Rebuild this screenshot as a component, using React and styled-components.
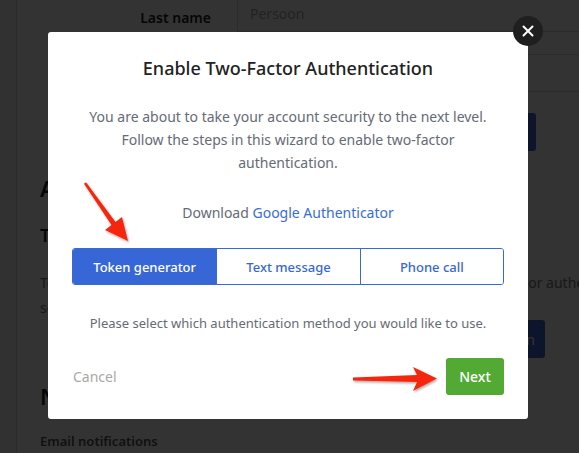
import React from 'react'
import styled, { createGlobalStyle } from 'styled-components'

const GlobalStyle = createGlobalStyle`
  html, body {
    margin: 0;
    padding: 0;
    background: #333;
  }
  body {
    font-family: "Noto Sans", "Open Sans", sans-serif;
  }
`;

const Page = styled.div`
  position: relative;
  width: 579px;
  height: 453px;
  overflow: hidden;
  display: flex;
  background: #fff;
`;

const Sidebar = styled.div`
  width: 16px;
  flex-shrink: 0;
  border-right: 1px solid #d6d6d6;
  background: #f4f4f4;
`;

const Main = styled.div`
  flex: 1;
  display: flex;
  flex-direction: column;
  padding-left: 23px;
  min-width: 0;

  & > * {
    flex-shrink: 0;
  }
`;

const FormRow = styled.div`
  display: flex;
  height: 38px;
  margin-top: ${p => p.$top}px;
`;

const Label = styled.div`
  width: 171px;
  text-align: right;
  font-size: 14px;
  font-weight: 600;
  color: #222;
  padding-top: 14px;
  box-sizing: border-box;
`;

const Input = styled.div`
  flex: 1;
  margin-left: 26px;
  border: 1px solid #d8d8d8;
  border-right: none;
  font-size: 14px;
  color: #aaa;
  padding: 9px 12px;
  box-sizing: border-box;
`;

const SaveButton = styled.div`
  align-self: flex-end;
  height: 38px;
  width: ${p => p.$w}px;
  margin-top: ${p => p.$top}px;
  margin-right: ${p => p.$right}px;
  background: #3d6ad6;
  border-radius: 3px;
  color: #fff;
  font-size: 14px;
  display: flex;
  align-items: center;
  justify-content: flex-end;
  padding-right: 10px;
  box-sizing: border-box;
`;

const Heading = styled.h2`
  margin: ${p => p.$top}px 0 0;
  font-size: 22px;
  line-height: 30px;
  font-weight: 600;
  color: #222;
`;

const SubHeading = styled.h3`
  margin: 19px 0 0;
  font-size: 18px;
  line-height: 26px;
  font-weight: 600;
  color: #222;
`;

const BodyText = styled.p`
  margin: 22px 0 0;
  font-size: 14px;
  line-height: 25px;
  color: #777;
  white-space: nowrap;
`;

const SmallLabel = styled.div`
  margin-top: 21px;
  font-size: 13px;
  line-height: 18px;
  font-weight: 600;
  color: #555;
`;

const CheckRow = styled.div`
  display: flex;
  gap: 248px;
  margin-top: 3px;
`;

const Check = styled.div`
  width: 14px;
  height: 14px;
  border: 1px solid #bbb;
  border-radius: 2px;
`;

const Overlay = styled.div`
  position: absolute;
  inset: 0;
  background: rgba(0, 0, 0, 0.8);
  display: flex;
  align-items: flex-start;
  padding: 32px 0 0 48px;
`;

const Modal = styled.div`
  position: relative;
  width: 480px;
  background: #fff;
  border-radius: 3px;
  padding: 24px;
  box-sizing: border-box;
  display: flex;
  flex-direction: column;
  align-items: center;
  text-align: center;
`;

const CloseButton = styled.button`
  position: absolute;
  top: -16px;
  right: -15px;
  width: 30px;
  height: 30px;
  border-radius: 50%;
  border: none;
  padding: 0;
  background: #1f1f1f;
  display: flex;
  align-items: center;
  justify-content: center;
`;

const Title = styled.h1`
  margin: 0;
  font-size: 18px;
  line-height: 24px;
  font-weight: 500;
  color: #222;
`;

const Intro = styled.p`
  margin: 25px 0 0;
  max-width: 415px;
  font-size: 14px;
  line-height: 23px;
  color: #666a78;
`;

const Download = styled.p`
  margin: 27px 0 0;
  font-size: 14px;
  line-height: 23px;
  color: #666a78;

  a {
    color: #3a6cd6;
    text-decoration: none;
  }
`;

const Segmented = styled.div`
  margin-top: 24px;
  width: 100%;
  display: grid;
  grid-template-columns: repeat(3, 1fr);
  border: 1px solid #3a68d5;
  border-radius: 3px;
  overflow: hidden;
  box-sizing: border-box;
`;

const Segment = styled.button`
  height: 35px;
  border: none;
  border-left: ${p => (p.$first ? 'none' : '1px solid #3a68d5')};
  background: ${p => (p.$active ? '#3767d6' : '#fff')};
  color: ${p => (p.$active ? '#fff' : '#3767d6')};
  font-family: inherit;
  font-size: 13px;
  font-weight: 500;
  padding: 0;
`;

const Hint = styled.p`
  margin: 28px 0 0;
  font-size: 13px;
  line-height: 20px;
  color: #666a78;
`;

const Footer = styled.div`
  margin-top: 25px;
  width: 100%;
  display: flex;
  align-items: center;
  justify-content: space-between;
`;

const CancelLink = styled.span`
  font-size: 14px;
  color: #a8a8a8;
  padding-left: 1px;
`;

const NextButton = styled.button`
  width: 58px;
  height: 37px;
  border: none;
  border-radius: 3px;
  background: #52a934;
  color: #fff;
  font-family: inherit;
  font-size: 14px;
  font-weight: 500;
  padding: 0;
`;

const Arrows = styled.svg`
  position: absolute;
  inset: 0;
  pointer-events: none;
`;

const App = () => {
  return (
    <>
      <GlobalStyle />
      <Page>
        <Sidebar />
        <Main>
          <FormRow $top={-6}>
            <Label>Last name</Label>
            <Input>Persoon</Input>
          </FormRow>
          <FormRow $top={22}>
            <Label />
            <Input />
          </FormRow>
          <SaveButton $top={21} $right={43} $w={80}>Save</SaveButton>
          <Heading $top={22}>Authentication</Heading>
          <SubHeading>Two-factor authentication</SubHeading>
          <BodyText>
            To increase the security of the account you can use a token generator app or authenticator
            <br />
            so you need more than a password to sign in.
          </BodyText>
          <SaveButton $top={0} $right={34} $w={80}>Turn on</SaveButton>
          <Heading $top={23}>Notifications</Heading>
          <SmallLabel>Email notifications</SmallLabel>
          <CheckRow>
            <Check />
            <Check />
          </CheckRow>
        </Main>

        <Overlay>
          <Modal>
            <CloseButton aria-label="Close">
              <svg width="12" height="12" viewBox="0 0 12 12">
                <path d="M1.5 1.5 L10.5 10.5 M10.5 1.5 L1.5 10.5" stroke="#fff" strokeWidth="2" strokeLinecap="round" />
              </svg>
            </CloseButton>
            <Title>Enable Two-Factor Authentication</Title>
            <Intro>
              You are about to take your account security to the next level. Follow the steps in this wizard to enable two-factor authentication.
            </Intro>
            <Download>
              Download <a href="#">Google Authenticator</a>
            </Download>
            <Segmented>
              <Segment $first $active>Token generator</Segment>
              <Segment>Text message</Segment>
              <Segment>Phone call</Segment>
            </Segmented>
            <Hint>Please select which authentication method you would like to use.</Hint>
            <Footer>
              <CancelLink>Cancel</CancelLink>
              <NextButton>Next</NextButton>
            </Footer>
          </Modal>
        </Overlay>

        <Arrows width="579" height="453" viewBox="0 0 579 453">
          <defs>
            <filter id="arrowShadow" x="-20%" y="-20%" width="140%" height="140%">
              <feDropShadow dx="1" dy="1.5" stdDeviation="1.2" floodColor="#000" floodOpacity="0.35" />
            </filter>
          </defs>
          <polygon
            points="86,182.3 115.5,222 122,217 128,241 105,230 111.5,225 84,183.7"
            fill="#f5280d"
            filter="url(#arrowShadow)"
          />
          <polygon
            points="353,377.6 417,375 413,367 437,378.5 413,391 417,382 353,380.6"
            fill="#f5280d"
            filter="url(#arrowShadow)"
          />
        </Arrows>
      </Page>
    </>
  )
}

export default App
